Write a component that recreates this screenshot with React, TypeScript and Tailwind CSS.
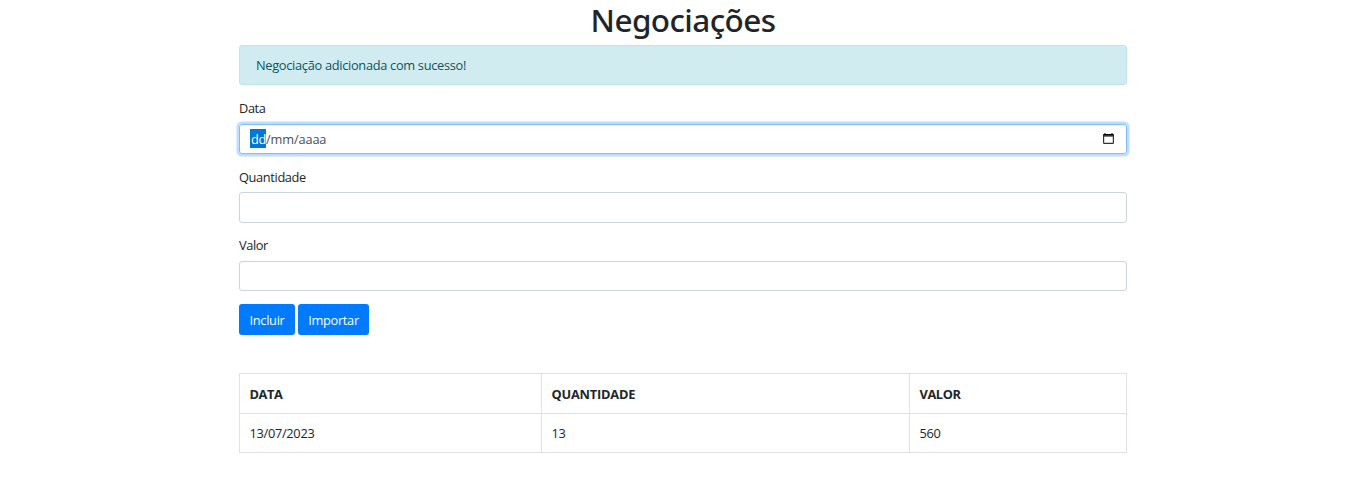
function Field({ label, className, inputClassName }: { label: string; className: string; inputClassName: string }) {
  return (
    <label className={`block ${className}`}>
      <span className="block h-[19px] leading-[19px]">{label}</span>
      <input
        type="text"
        className={`block w-full rounded-[3px] border border-[#ced4da] bg-white px-[10px] outline-none ${inputClassName}`}
      />
    </label>
  );
}

function CalendarIcon() {
  return (
    <svg className="-mt-[2px]" width="11" height="11" viewBox="0 0 11 11">
      <path d="M1.5 0h1v1h6V0h1v1h.5a1 1 0 0 1 1 1v1.5H0V2a1 1 0 0 1 1-1h.5z" fill="#000" />
      <rect x="0.6" y="2.5" width="9.8" height="7.9" rx="0.6" fill="none" stroke="#333" strokeWidth="1.2" />
    </svg>
  );
}

export default function App() {
  return (
    <div className="h-[501px] overflow-hidden bg-white font-['Open_Sans','Noto_Sans',sans-serif] text-[12.8px] tracking-[-0.3px] text-[#212529]">
      <main className="ml-[239px] w-[888px]">
        <h1 className="h-[45px] text-center font-['Noto_Sans',sans-serif] text-[31.5px] leading-[40px] font-medium tracking-[-0.6px]">
          Negociações
        </h1>
        <div className="flex h-[40px] items-center rounded-[3px] border border-[#bee5eb] bg-[#d1ecf1] px-[16px] pt-[2px] text-[#0c5460]">
          Negociação adicionada com sucesso!
        </div>

        <div className="mt-[14px]">
          <span className="block h-[19px] leading-[19px] tracking-[-0.4px]">Data</span>
          <div className="mt-[6px] flex h-[30px] items-center justify-between rounded-[3px] border border-[#80bdff] pr-[12px] pl-[10px] text-[#495057] shadow-[0_0_0_2.5px_#bfdeff]">
            <span className="-mt-px flex h-[19px] leading-[21px] tracking-[-0.15px]">
              <span className="w-[16px] bg-[#0078d7] pl-px tracking-[-0.4px] text-white">dd</span>
              <span>/mm/aaaa</span>
            </span>
            <CalendarIcon />
          </div>
        </div>
        <Field label="Quantidade" className="mt-[14px] tracking-[-0.36px]" inputClassName="mt-[5px] h-[31px]" />
        <Field label="Valor" className="mt-[13px] tracking-[-0.4px]" inputClassName="mt-[6px] h-[30px]" />

        <div className="mt-[13px] flex gap-[3px] text-white">
          <button className="h-[31px] w-[56px] rounded-[3px] bg-[#007bff] pt-[2px]">Incluir</button>
          <button className="h-[31px] w-[71px] rounded-[3px] bg-[#007bff] pt-[2px]">Importar</button>
        </div>

        <table className="mt-[38px] w-full table-fixed border-collapse text-left">
          <colgroup>
            <col className="w-[302px]" />
            <col className="w-[368px]" />
            <col />
          </colgroup>
          <thead>
            <tr className="h-[40px]">
              <th className="border border-[#dee2e6] px-[9.5px] pt-[2px] font-bold tracking-[-0.4px]">DATA</th>
              <th className="border border-[#dee2e6] px-[9.5px] pt-[2px] font-bold tracking-[-0.2px]">QUANTIDADE</th>
              <th className="border border-[#dee2e6] px-[9.5px] pt-[2px] font-bold tracking-[-0.4px]">VALOR</th>
            </tr>
          </thead>
          <tbody>
            <tr className="h-[39px]">
              <td className="border border-[#dee2e6] px-[9.5px] pt-[2px]">13/07/2023</td>
              <td className="border border-[#dee2e6] px-[9.5px] pt-[2px]">13</td>
              <td className="border border-[#dee2e6] px-[9.5px] pt-[2px]">560</td>
            </tr>
          </tbody>
        </table>
      </main>
    </div>
  );
}
